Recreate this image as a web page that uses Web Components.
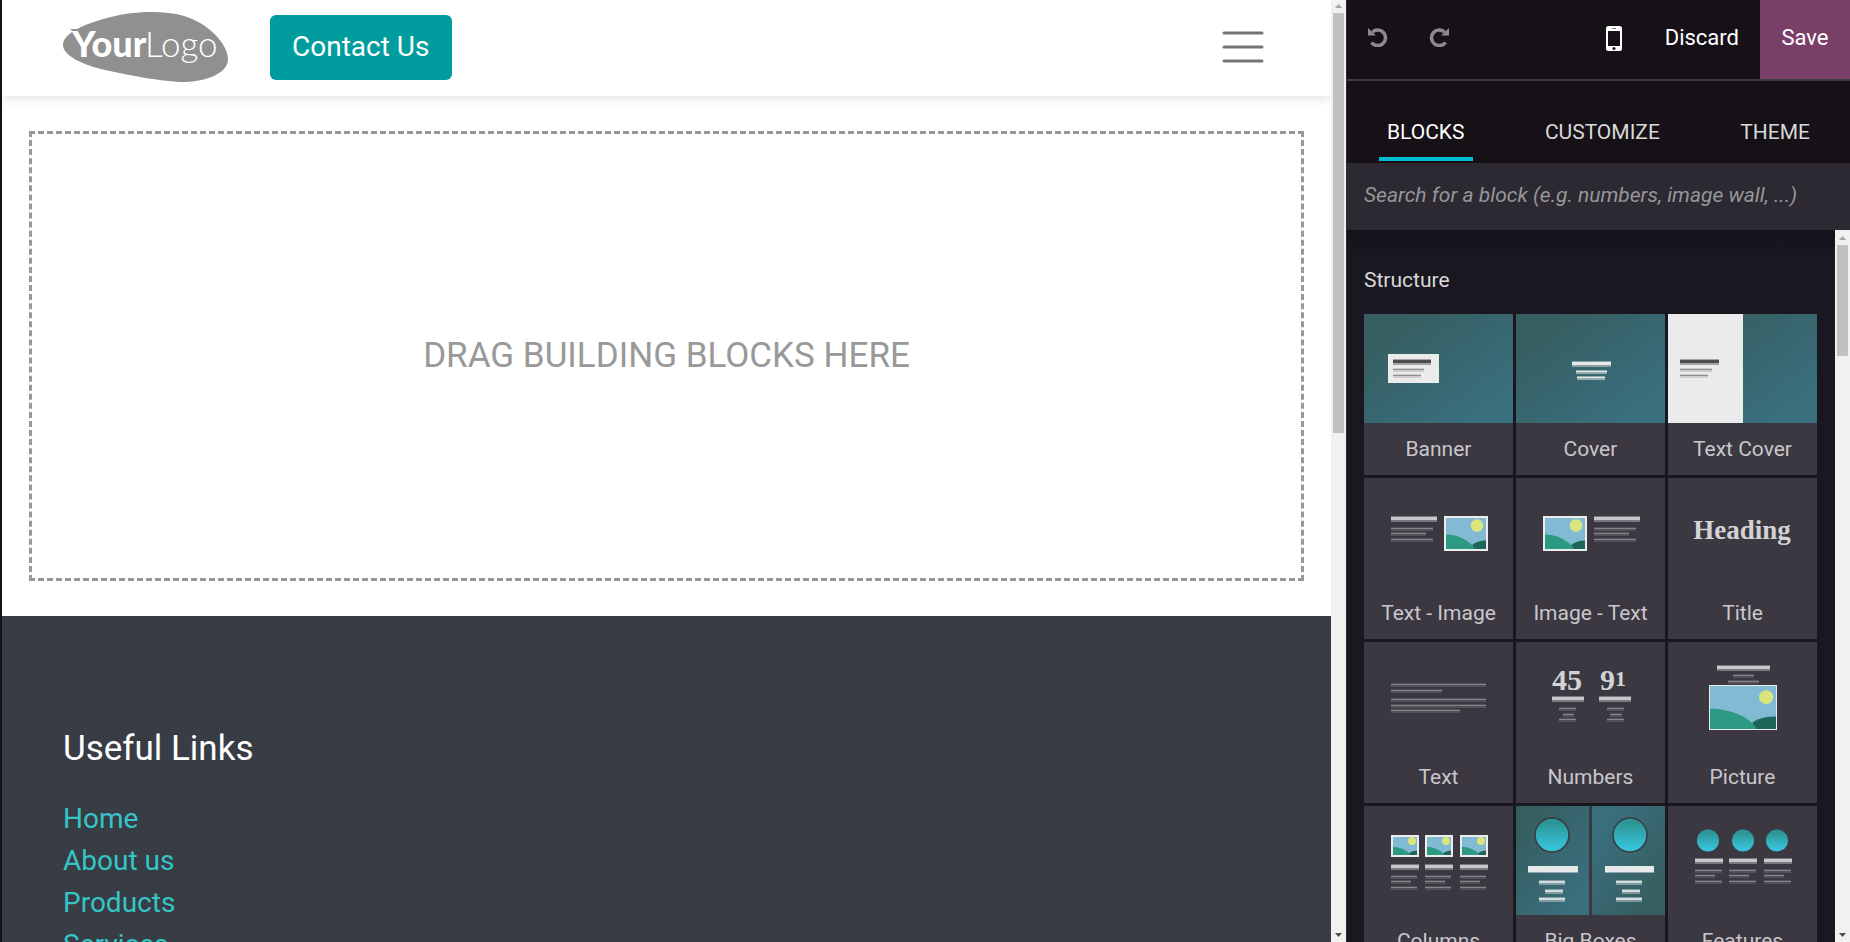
<!DOCTYPE html>
<html lang="en">
<head>
<meta charset="utf-8">
<meta name="viewport" content="width=device-width, initial-scale=1">
<title>Website Builder</title>
<style>
  body {
    margin: 0;
    font-family: Roboto, "Liberation Sans", sans-serif;
    background: #fff;
  }
</style>
</head>
<body>
<website-builder>
  <site-page slot="page">
    <site-header slot="header"></site-header>
    <drop-zone>Drag building blocks here</drop-zone>
    <site-footer slot="footer">
      <span slot="title">Useful Links</span>
      <footer-link href="#home">Home</footer-link>
      <footer-link href="#about">About us</footer-link>
      <footer-link href="#products">Products</footer-link>
      <footer-link href="#services">Services</footer-link>
    </site-footer>
  </site-page>
  <editor-panel slot="panel">
    <block-group>
      <span slot="title">Structure</span>
      <block-item thumb="banner">Banner</block-item>
      <block-item thumb="cover">Cover</block-item>
      <block-item thumb="textCover">Text Cover</block-item>
      <block-item thumb="textImage">Text - Image</block-item>
      <block-item thumb="imageText">Image - Text</block-item>
      <block-item thumb="title">Title</block-item>
      <block-item thumb="text">Text</block-item>
      <block-item thumb="numbers">Numbers</block-item>
      <block-item thumb="picture">Picture</block-item>
      <block-item thumb="columns">Columns</block-item>
      <block-item thumb="bigBoxes">Big Boxes</block-item>
      <block-item thumb="features">Features</block-item>
    </block-group>
  </editor-panel>
</website-builder>

<script>
// Base: puts the styles and the markup of each class in its shadow root
class BaseElement extends HTMLElement {
  constructor() {
    super();
    this.attachShadow({ mode: "open" });
  }

  connectedCallback() {
    this.shadowRoot.innerHTML = `<style>${this.constructor.styles}</style>${this.render()}`;
  }
}

class WebsiteBuilder extends BaseElement {
  static get styles() {
    return `
    :host {
      display: flex;
      height: 100vh;
      overflow: hidden;
      box-sizing: border-box;
      border-left: 2px solid #131114;
    }
    main { flex: 1; min-width: 0; }
    aside { flex: 0 0 504px; min-width: 0; }
    `;
  }

  render() {
    return `<main><slot name="page"></slot></main><aside><slot name="panel"></slot></aside>`;
  }
}

class ScrollTrack extends BaseElement {
  static get styles() {
    return `
    :host {
      display: flex;
      flex-direction: column;
      flex: 0 0 15px;
      background: #f1f1f1;
    }
    svg { display: block; flex: none; }
    .track { flex: 1; padding: 0 2px; }
    .thumb { background: #c1c1c1; }
    `;
  }

  render() {
    const top = Number(this.getAttribute("top")) || 15;
    const size = this.getAttribute("size");
    return `
    <svg width="15" height="${top}"><path d="M4 ${top - 5}L7.500 ${top - 9}L11 ${top - 5}z" fill="#a3a3a3"/></svg>
    <div class="track"><div class="thumb" style="height:${size}"></div></div>
    <svg width="15" height="15"><path d="M4 6h7L7.500 10z" fill="#505050"/></svg>
    `;
  }
}

class SitePage extends BaseElement {
  static get styles() {
    return `
    :host { display: flex; height: 100%; }
    .page { flex: 1; min-width: 0; overflow: hidden; }
    .content { padding: 35px 27px; }
    `;
  }

  render() {
    return `
    <div class="page">
      <slot name="header"></slot>
      <div class="content"><slot></slot></div>
      <slot name="footer"></slot>
    </div>
    <scroll-track top="13" size="46%"></scroll-track>
    `;
  }
}

class SiteHeader extends BaseElement {
  static get styles() {
    return `
    :host {
      display: flex;
      align-items: center;
      height: 94px;
      padding: 0 61px 2px;
      background: #fff;
      box-shadow: 0 2px 10px rgba(0, 0, 0, .12);
    }
    svg { display: block; }
    .logo { margin-right: 42px; }
    .contact {
      padding: 11px 23px 12px 22px;
      border-radius: 6px;
      background: #009c9e;
      color: #fff;
      font-size: 28px;
      line-height: 42px;
      text-decoration: none;
    }
    .menu {
      margin-left: auto;
      padding: 6px;
      border: 0;
      background: none;
      cursor: pointer;
    }
    `;
  }

  render() {
    return `
    <a class="logo" href="#home" aria-label="Home">
      <svg width="165" height="70" viewBox="0 0 165 70">
        <path d="M0 33C0 20 26 9 62 2C82-1 104-1 121 4C145 11 165 32 165 47C165 62 142 70 118 70C94 69 60 62 38 57C18 52 0 43 0 33z" fill="#909090"/>
        <path d="M7 17h12l-5 6z" fill="#909090"/>
        <text x="9" y="45" font-family="Lato" font-weight="900" font-size="36" fill="#fff">Your</text>
        <text x="82" y="45" font-family="Lato" font-weight="300" font-size="35" fill="#fff">Logo</text>
      </svg>
    </a>
    <a class="contact" href="#contact">Contact Us</a>
    <button class="menu" aria-label="Menu">
      <svg width="42" height="36" viewBox="0 0 42 36" stroke="#757575" stroke-width="3" stroke-linecap="round">
        <path d="M2 4H40M2 18H40M2 32H40"/>
      </svg>
    </button>
    `;
  }
}

class DropZone extends BaseElement {
  static get styles() {
    return `
    :host {
      display: flex;
      align-items: center;
      justify-content: center;
      min-height: 442px;
      padding-bottom: 2px;
      border: 3px dashed #999;
      color: #999;
      font-size: 35px;
      text-transform: uppercase;
    }
    `;
  }

  render() {
    return `<span><slot></slot></span>`;
  }
}

class SiteFooter extends BaseElement {
  static get styles() {
    return `
    :host {
      display: block;
      min-height: 340px;
      padding: 112px 61px 56px;
      background: #383c44;
    }
    h5 {
      margin: 0 0 28px;
      color: #fff;
      font-size: 35px;
      font-weight: 400;
      line-height: 42px;
    }
    nav { display: flex; flex-direction: column; align-items: flex-start; }
    `;
  }

  render() {
    return `<h5><slot name="title"></slot></h5><nav><slot></slot></nav>`;
  }
}

class FooterLink extends BaseElement {
  static get styles() {
    return `
    :host { display: block; font-size: 28px; line-height: 42px; }
    a { color: #35c5c7; text-decoration: none; }
    `;
  }

  render() {
    return `<a href="${this.getAttribute("href")}"><slot></slot></a>`;
  }
}

class EditorPanel extends BaseElement {
  static get styles() {
    return `
    :host {
      display: flex;
      flex-direction: column;
      height: 100%;
      box-sizing: border-box;
      border-left: 1px solid #2b2933;
      background: #1b1721;
      color: #d9d9d9;
    }
    button {
      border: 0;
      padding: 0;
      background: none;
      color: inherit;
      font: inherit;
      cursor: pointer;
    }
    svg { display: block; }
    .bar {
      display: flex;
      flex: none;
      height: 79px;
      border-bottom: 2px solid #3e3b42;
      background: #161116;
      color: #fff;
      font-size: 22px;
    }
    .bar button { padding-bottom: 5px; }
    .icon { width: 61px; display: flex; align-items: center; justify-content: center; }
    .mobile { margin-left: auto; width: 60px; }
    .bar .mobile { padding-bottom: 2px; }
    .discard { padding: 0 21px; }
    .bar .save { width: 90px; background: #793f68; }
    .tabs {
      display: flex;
      flex: none;
      justify-content: space-between;
      align-items: flex-end;
      height: 82px;
      padding: 0 32px 0;
      background: #161116;
      font-size: 21px;
    }
    .tabs button {
      height: 54px;
      padding: 0 8px;
      margin-bottom: 2px;
      border-bottom: 4px solid transparent;
      text-transform: uppercase;
    }
    .tabs .active { color: #fff; border-bottom-color: #00bcd4; }
    input {
      flex: none;
      height: 67px;
      box-sizing: border-box;
      padding: 0 17px 4px;
      border: 0;
      border-radius: 0;
      outline: 0;
      background: #2c2932;
      color: #d9d9d9;
      font: italic 21px Roboto, "Liberation Sans", sans-serif;
    }
    input::placeholder { color: #979699; opacity: 1; }
    .body {
      display: flex;
      flex: 1;
      min-height: 0;
    }
    .list {
      flex: 1;
      min-width: 0;
      overflow: hidden;
      background: linear-gradient(#14111a, #1b1721 24px);
    }
    `;
  }

  render() {
    // same arrow for both icons, the second one mirrored
    const arrow = `<path d="M4.500 5A7.800 7.800 0 1 1 3.500 15.500" fill="none" stroke="#8c8a8d" stroke-width="3.500"/><path d="M0 1v7.500h8z" fill="#8c8a8d"/>`;
    return `
    <div class="bar">
      <button class="icon" aria-label="Undo"><svg width="20" height="20" viewBox="0 0 20 20">${arrow}</svg></button>
      <button class="icon" aria-label="Redo"><svg width="20" height="20" viewBox="0 0 20 20"><g transform="translate(20) scale(-1 1)">${arrow}</g></svg></button>
      <button class="icon mobile" aria-label="Mobile preview">
        <svg width="16" height="25" viewBox="0 0 16 25">
          <rect width="16" height="25" rx="2.500" fill="#fff"/>
          <rect x="2" y="5" width="12" height="15" fill="#161116"/>
          <rect x="6" y="2" width="4" height="1" fill="#777"/>
          <circle cx="8" cy="22.500" r="1.500" fill="#161116"/>
        </svg>
      </button>
      <button class="discard">Discard</button>
      <button class="save">Save</button>
    </div>
    <div class="tabs" role="tablist">
      <button class="active" role="tab" aria-selected="true">Blocks</button>
      <button role="tab">Customize</button>
      <button role="tab">Theme</button>
    </div>
    <input type="text" aria-label="Search for a block" placeholder="Search for a block (e.g. numbers, image wall, ...)">
    <div class="body">
      <div class="list"><slot></slot></div>
      <scroll-track top="15" size="111px"></scroll-track>
    </div>
    `;
  }
}

class BlockGroup extends BaseElement {
  static get styles() {
    return `
    :host { display: block; padding: 34px 18px 0 17px; }
    h2 { margin: 0 0 18px; font-size: 21px; font-weight: 400; line-height: 32px; }
    .grid {
      display: grid;
      grid-template-columns: repeat(3, 1fr);
      gap: 3px;
    }
    `;
  }

  render() {
    return `<h2><slot name="title"></slot></h2><div class="grid"><slot></slot></div>`;
  }
}

// ---- thumbnails, drawn on a 149 x 109 canvas ----

// heading bar with its shadow
const bold = (x, y, w, color = "#c9c7ca") => `
  <rect x="${x}" y="${y}" width="${w}" height="6" fill="${color}" opacity=".45"/>
  <rect x="${x}" y="${y + 1}" width="${w}" height="3" fill="${color}"/>`;

// text line with its shadow
const thin = (x, y, w, color = "#8b898e", shadow = .3) => `
  <rect x="${x}" y="${y}" width="${w}" height="4" fill="${color}" opacity="${shadow}"/>
  <rect x="${x}" y="${y + 1}" width="${w}" height="1" fill="${color}" opacity=".9"/>`;

const photo = (x, y, w, h, b = 2, sun = .75) => {
  const r = h > 40 ? 7 : h * .18;
  const bottom = h - b;
  return `
  <g transform="translate(${x} ${y})">
    <rect width="${w}" height="${h}" fill="#ececec"/>
    <rect x="${b}" y="${b}" width="${w - 2 * b}" height="${h - 2 * b}" fill="#82bad4"/>
    <circle cx="${w * sun}" cy="${h * .27}" r="${r}" fill="#dbe57b"/>
    <path d="M${w * .64} ${h * .83}Q${w * .76} ${h * .7} ${w - b} ${h * .7}V${bottom}H${w * .66}z" fill="#1f665a"/>
    <path d="M${b} ${h * .53}C${w * .3} ${h * .53} ${w * .6} ${h * .7} ${w * .7} ${bottom}H${b}z" fill="#2c9a82"/>
  </g>`;
};

const gradient = (id, from, to, x2 = 1, y2 = 1) => `
  <linearGradient id="${id}" x2="${x2}" y2="${y2}">
    <stop offset="0.150" stop-color="${from}"/><stop offset=".85" stop-color="${to}"/>
  </linearGradient>`;

const teal = gradient("teal", "#365e60", "#3a6f7e");
const ball = gradient("ball", "#2c9596", "#37c2d6", 0, 1);
const paragraph = (x, y, w, w2) => thin(x, y, w) + thin(x, y + 5, w2) + thin(x, y + 11, w);
const number = (x, text) => `<text x="${x}" y="48" font-family="Liberation Serif" font-weight="700" font-size="30" fill="#d3d2d4">${text}</text>`;

const bigBox = (x, bar, cx) => `
  <circle cx="${cx}" cy="29" r="17" fill="url(#ball)" stroke="#3b3842" stroke-width="1.500"/>
  <rect x="${x}" y="60" width="${bar}" height="7" fill="#e6e9ea" opacity=".5"/>
  <rect x="${x}" y="60" width="${bar}" height="6" fill="#e6e9ea"/>
  ${[[11, 74, 26], [17, 83, 18], [11, 91, 26]].map(([dx, y, w]) => `
    <rect x="${x + dx}" y="${y}" width="${w}" height="5" fill="#d5dcde" opacity=".45"/>
    <rect x="${x + dx}" y="${y + 1}" width="${w}" height="2" fill="#d5dcde"/>`).join("")}`;

const THUMBS = {
  banner: () => `${teal}<rect width="149" height="109" fill="url(#teal)"/>
    <rect x="24" y="40" width="51" height="29" fill="#ebebeb"/>
    ${bold(29, 45, 38, "#4d4d4d")}${thin(29, 54, 31, "#888")}${thin(29, 60, 28, "#888")}`,
  cover: () => `${teal}<rect width="149" height="109" fill="url(#teal)"/>
    ${bold(56, 47, 39, "#e8e8e8")}${thin(60, 56, 31, "#f0f0f0", .5)}${thin(61, 62, 28, "#f0f0f0", .5)}`,
  textCover: () => `${teal}<rect width="149" height="109" fill="url(#teal)"/>
    <rect width="75" height="109" fill="#ebebeb"/>
    ${bold(12, 45, 39, "#4d4d4d")}${thin(12, 54, 32, "#888")}${thin(12, 60, 28, "#888")}`,
  textImage: () => bold(27, 38, 46) + paragraph(27, 49, 42, 35) + photo(80, 38, 44, 35),
  imageText: () => photo(27, 38, 44, 35) + bold(78, 38, 46) + paragraph(78, 49, 42, 35),
  title: () => `<text x="74" y="61" text-anchor="middle" font-family="Liberation Serif" font-weight="700" font-size="27" fill="#d3d2d4">Heading</text>`,
  text: () => thin(27, 41, 95) + thin(27, 47, 51) + thin(27, 56, 95) + thin(27, 62, 95) + thin(27, 67, 69),
  numbers: () => number(36, "45") + number(84, `9<tspan y="44" font-size="22">1</tspan>`)
    + bold(36, 54, 32) + thin(43, 65, 17) + thin(47, 71, 11) + thin(43, 76, 17)
    + bold(83, 54, 32) + thin(91, 65, 17) + thin(94, 71, 12) + thin(91, 76, 17),
  picture: () => bold(49, 23, 53) + thin(65, 32, 21) + thin(60, 38, 31) + photo(41, 43, 68, 45, 1, .84),
  columns: () => [27, 61, 96].map((x) => photo(x, 29, 28, 22) + bold(x, 58, 28) + paragraph(x, 69, 26, 20)).join(""),
  bigBoxes: () => `${teal}${gradient("back", "#3a6f7e", "#365e60")}${ball}
    <rect width="73" height="109" fill="url(#teal)"/>
    <rect x="76" width="73" height="109" fill="url(#back)"/>
    ${bigBox(12, 50, 36)}${bigBox(89, 49, 114)}`,
  features: () => ball + [[27, 40], [61, 75], [96, 109]].map(([x, cx]) => `
    <circle cx="${cx}" cy="34.500" r="11" fill="url(#ball)"/>${bold(x, 52, 28)}${paragraph(x, 63, 27, 20)}`).join("")
};

class BlockItem extends BaseElement {
  static get styles() {
    return `
    :host { display: block; background: #3b3842; }
    button {
      display: block;
      width: 100%;
      padding: 0;
      border: 0;
      background: none;
      color: #c9c7ca;
      font: 21px Roboto, "Liberation Sans", sans-serif;
      line-height: 52px;
      cursor: grab;
    }
    svg { display: block; width: 100%; }
    `;
  }

  render() {
    const draw = THUMBS[this.getAttribute("thumb")];
    return `
    <button>
      <svg viewBox="0 0 149 109" aria-hidden="true">${draw()}</svg>
      <slot></slot>
    </button>
    `;
  }
}

customElements.define("scroll-track", ScrollTrack);
customElements.define("website-builder", WebsiteBuilder);
customElements.define("site-page", SitePage);
customElements.define("site-header", SiteHeader);
customElements.define("drop-zone", DropZone);
customElements.define("site-footer", SiteFooter);
customElements.define("footer-link", FooterLink);
customElements.define("editor-panel", EditorPanel);
customElements.define("block-group", BlockGroup);
customElements.define("block-item", BlockItem);
</script>
</body>
</html>
